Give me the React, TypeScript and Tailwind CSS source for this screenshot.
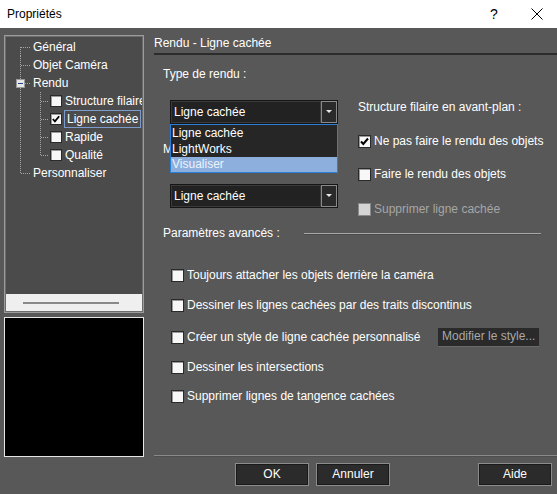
import React from "react";

const Check = ({ size = 13 }: { size?: number }) => (
  <svg width={size - 2} height={size - 2} viewBox="0 0 11 11" className="block">
    <path d="M2 5.5 L4.3 8 L9 2.5" stroke="#000" strokeWidth="2" fill="none" />
  </svg>
);

const Box = ({ checked = false, disabled = false, size = 13 }: { checked?: boolean; disabled?: boolean; size?: number }) => (
  <div
    className={
      "flex items-center justify-center shrink-0 border " +
      (disabled ? "bg-[#d4d4d4] border-[#8a8a8a]" : "bg-[#f7f7f7] border-[#2a2a2a] shadow-[inset_1px_1px_0_#9a9a9a]")
    }
    style={{ width: size, height: size }}
  >
    {checked && <Check size={size} />}
  </div>
);

type Seg = { root: "first" | "full" | "last"; child?: "full" | "last"; level: 0 | 1; box?: boolean };

const Lines = ({ root, child, level, box }: Seg) => {
  const w = level === 0 ? 26 : 43;
  const dash = { stroke: "#a6a6a6", strokeWidth: 1, strokeDasharray: "1 1", fill: "none" } as const;
  return (
    <svg width={w} height={18} className="block shrink-0">
      {root === "first" && <line x1={14.5} y1={9} x2={14.5} y2={18} {...dash} />}
      {root === "full" && <line x1={14.5} y1={0} x2={14.5} y2={18} {...dash} />}
      {root === "last" && <line x1={14.5} y1={0} x2={14.5} y2={9.5} {...dash} />}
      {level === 0 && !box && <line x1={15} y1={9.5} x2={24} y2={9.5} {...dash} />}
      {level === 0 && box && (
        <g>
          <line x1={19} y1={9.5} x2={24} y2={9.5} {...dash} />
          <rect x={10.5} y={5.5} width={8} height={8} fill="#e6e6e6" stroke="#9a9a9a" />
          <line x1={12} y1={9.5} x2={17} y2={9.5} stroke="#1f3f8f" strokeWidth={1} />
        </g>
      )}
      {level === 1 && child === "full" && <line x1={34.5} y1={0} x2={34.5} y2={18} {...dash} />}
      {level === 1 && child === "last" && <line x1={34.5} y1={0} x2={34.5} y2={9.5} {...dash} />}
      {level === 1 && <line x1={35} y1={9.5} x2={42} y2={9.5} {...dash} />}
    </svg>
  );
};

const TreeRow = ({ seg, label, checked, selected }: { seg: Seg; label: string; checked?: boolean; selected?: boolean }) => (
  <div className="flex items-center h-[18px] whitespace-nowrap">
    <Lines {...seg} />
    {seg.level === 1 && (
      <div className="ml-[1px]">
        <Box checked={checked} size={12} />
      </div>
    )}
    <div
      className={
        "h-[18px] flex items-center " +
        (seg.level === 1 ? "ml-[2px] " : "") +
        (selected ? "border border-[#7b9ccc] pl-[2px] pr-[2px]" : "pl-[1px]")
      }
    >
      {label}
    </div>
  </div>
);

const CheckRow = ({ label, checked, disabled }: { label: string; checked?: boolean; disabled?: boolean }) => (
  <div className="flex items-center h-[15px]">
    <Box checked={checked} disabled={disabled} />
    <span className={"ml-[3px] whitespace-nowrap " + (disabled ? "text-[#a6a6a6]" : "")}>{label}</span>
  </div>
);

const Combo = ({ value }: { value: string }) => (
  <div className="flex h-[24px] w-[168px] bg-[#222222] border border-[#151515]">
    <div className="flex-1 flex items-center pl-[2px] border border-[#3a3a3a]">{value}</div>
    <div className="w-[16px] border border-[#8a8a8a] bg-[#2a2a2a] flex items-center justify-center">
      <svg width="6" height="4" viewBox="0 0 6 4">
        <path d="M0 0 L6 0 L3 3 Z" fill="#e8e8e8" />
      </svg>
    </div>
  </div>
);

const Btn = ({ label, className = "" }: { label: string; className?: string }) => (
  <div
    className={
      "w-[74px] h-[23px] border border-[#8c8c8c] bg-[#2b2b2b] shadow-[inset_0_0_0_1px_#1a1a1a] flex items-center justify-center " +
      className
    }
  >
    {label}
  </div>
);

export default function App() {
  return (
    <div className="w-[557px] h-[494px] bg-[#585858] flex flex-col text-[12px] leading-[15px] text-white font-['Liberation_Sans',Arial,sans-serif] overflow-hidden">
      {/* Title bar */}
      <div className="h-[28px] shrink-0 bg-white text-black flex items-center">
        <div className="pl-[7px] flex-1 text-[12px]">Propriétés</div>
        <div className="w-[12px] text-[14px] mr-[29px]">?</div>
        <svg width="12" height="12" viewBox="0 0 12 12" className="mr-[14px]">
          <path d="M0.5 0.5 L11.5 11.5 M11.5 0.5 L0.5 11.5" stroke="#000" strokeWidth="1" />
        </svg>
      </div>

      <div className="flex flex-1">
        {/* Left column */}
        <div className="w-[154px] shrink-0 pl-[4px] pt-[7px] flex flex-col">
          <div className="w-[140px] h-[278px] border border-[#9c9c9c]">
            <div className="w-full h-full border border-[#6c6c6c] bg-[#4b4b4b] flex flex-col">
              <div className="flex-1 overflow-hidden pt-[1px]">
                <TreeRow seg={{ root: "first", level: 0 }} label="Général" />
                <TreeRow seg={{ root: "full", level: 0 }} label="Objet Caméra" />
                <TreeRow seg={{ root: "full", level: 0, box: true }} label="Rendu" />
                <TreeRow seg={{ root: "full", child: "full", level: 1 }} label="Structure filaire" />
                <TreeRow seg={{ root: "full", child: "full", level: 1 }} label="Ligne cachée" checked selected />
                <TreeRow seg={{ root: "full", child: "full", level: 1 }} label="Rapide" />
                <TreeRow seg={{ root: "full", child: "last", level: 1 }} label="Qualité" />
                <TreeRow seg={{ root: "last", level: 0 }} label="Personnaliser" />
              </div>
              <div className="h-[17px] bg-[#efefef] flex items-center pl-[17px]">
                <div className="w-[96px] h-[2px] bg-[#8a8a8a]" />
              </div>
            </div>
          </div>
          <div className="mt-[4px] w-[140px] h-[140px] bg-black border border-[#e6e6e6]" />
        </div>

        {/* Right column */}
        <div className="flex-1 flex flex-col">
          <div className="pt-[8px]">Rendu - Ligne cachée</div>
          <div className="mt-[2px] h-[2px] bg-[#2c2c2c]" />

          <div className="pl-[9px]">
            <div className="mt-[12px]">Type de rendu :</div>

            <div className="mt-[18px] h-[118px] flex">
              <div className="relative w-[175px] shrink-0">
                <div className="ml-[7px]">
                  <Combo value="Ligne cachée" />
                </div>
                <div className="mt-[18px]">M</div>
                <div className="ml-[7px] mt-[27px]">
                  <Combo value="Ligne cachée" />
                </div>
                {/* open dropdown list */}
                <div className="absolute left-[7px] top-[24px] w-[168px] h-[49px] border border-[#2a7fd8] bg-[#262626] flex flex-col">
                  <div className="h-[16px] flex items-center pl-[1px]">Ligne cachée</div>
                  <div className="h-[16px] flex items-center pl-[1px]">LightWorks</div>
                  <div className="h-[15px] flex items-center pl-[1px] bg-[#8cafdd] text-[#eef3fb]">Visualiser</div>
                </div>
              </div>
              <div className="ml-[20px] flex flex-col">
                <div>Structure filaire en avant-plan :</div>
                <div className="mt-[19px]">
                  <CheckRow label="Ne pas faire le rendu des objets" checked />
                </div>
                <div className="mt-[18px]">
                  <CheckRow label="Faire le rendu des objets" />
                </div>
                <div className="mt-[20px]">
                  <CheckRow label="Supprimer ligne cachée" disabled />
                </div>
              </div>
            </div>

            <div className="mt-[8px] flex items-center pr-[16px]">
              <span className="whitespace-nowrap">Paramètres avancés :</span>
              <div className="ml-[24px] flex-1 h-[2px] border-t border-[#a8a8a8] border-b border-b-[#4a4a4a]" />
            </div>

            <div className="pl-[8px] pr-[18px]">
              <div className="mt-[24px] h-[20px] flex items-center">
                <CheckRow label="Toujours attacher les objets derrière la caméra" />
              </div>
              <div className="mt-[10px] h-[20px] flex items-center">
                <CheckRow label="Dessiner les lignes cachées par des traits discontinus" />
              </div>
              <div className="mt-[12px] h-[20px] flex items-center justify-between">
                <CheckRow label="Créer un style de ligne cachée personnalisé" />
                <div className="w-[101px] h-[19px] bg-[#2a2a2a] border-b border-[#6a6a6a] flex items-center pl-[4px] text-[#a8a8a8] whitespace-nowrap">
                  Modifier le style...
                </div>
              </div>
              <div className="mt-[10px] h-[20px] flex items-center">
                <CheckRow label="Dessiner les intersections" />
              </div>
              <div className="mt-[9px] h-[20px] flex items-center">
                <CheckRow label="Supprimer lignes de tangence cachées" />
              </div>
            </div>
          </div>

          <div className="mt-auto">
            <div className="h-[2px] border-t border-[#8a8a8a] border-b border-b-[#4e4e4e]" />
            <div className="mt-[6px] h-[23px] flex pr-[5px]">
              <Btn label="OK" className="ml-[81px]" />
              <Btn label="Annuler" className="ml-[7px]" />
              <Btn label="Aide" className="ml-auto" />
            </div>
            <div className="h-[8px]" />
          </div>
        </div>
      </div>
    </div>
  );
}
